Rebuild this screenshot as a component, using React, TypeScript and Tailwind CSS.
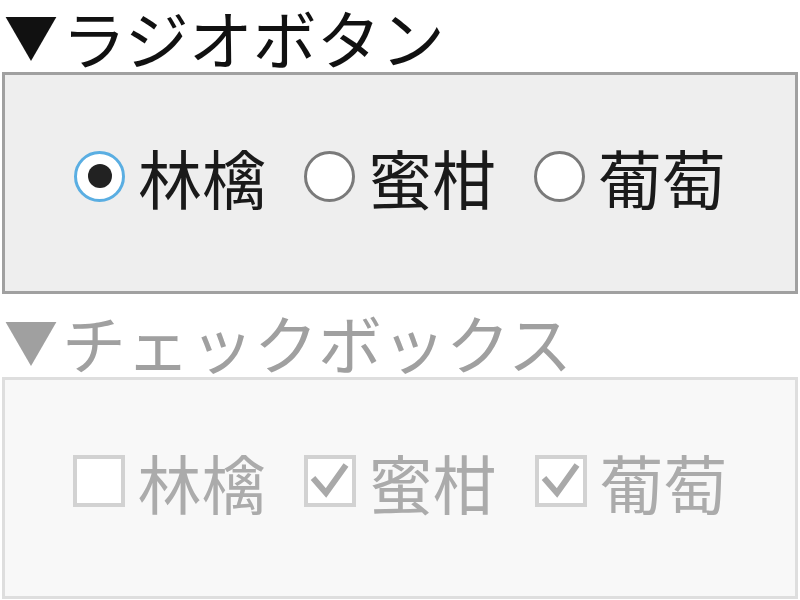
import React from 'react';

const items = ['林檎', '蜜柑', '葡萄'];

function Radio({ checked }: { checked: boolean }) {
  return (
    <span
      className={
        checked
          ? 'w-[51px] h-[51px] rounded-full border-[3px] border-[#5aaee2] bg-white flex items-center justify-center shrink-0'
          : 'w-[51px] h-[51px] rounded-full border-[3px] border-[#7a7a7a] bg-white flex items-center justify-center shrink-0'
      }
    >
      {checked && <span className="w-[24px] h-[24px] rounded-full bg-[#222]" />}
    </span>
  );
}

function Checkbox({ checked }: { checked: boolean }) {
  return (
    <span className="w-[52px] h-[52px] border-[4px] border-[#d2d2d2] bg-white flex items-center justify-center shrink-0">
      {checked && (
        <svg width="44" height="44" viewBox="0 0 44 44">
          <polyline points="5,19 18,34 38,6" fill="none" stroke="#a9a9a9" strokeWidth="6" />
        </svg>
      )}
    </span>
  );
}

function Heading({ text, dim }: { text: string; dim?: boolean }) {
  return (
    <h2
      className={
        dim
          ? 'flex items-center h-[72px] text-[#a0a0a0] font-normal whitespace-nowrap'
          : 'flex items-center h-[72px] text-[#111] font-normal whitespace-nowrap'
      }
    >
      <span className="w-[62px] text-center text-[54px] leading-[64px] -mt-[2px]">▼</span>
      <span className="text-[64px] leading-[64px]">{text}</span>
    </h2>
  );
}

export default function App() {
  return (
    <div className="w-[800px] h-[600px] bg-white overflow-hidden font-['Noto_Sans_CJK_JP',sans-serif]">
      <Heading text="ラジオボタン" />
      <div className="mx-[2px] h-[222px] border-[3px] border-[#a0a0a0] bg-[#eeeeee] flex items-center justify-center gap-[38px] pb-[14px]">
        {items.map((t, i) => (
          <label key={t} className="flex items-center gap-[13px]">
            <Radio checked={i === 0} />
            <span className="text-[64px] leading-none text-[#1a1a1a]">{t}</span>
          </label>
        ))}
      </div>
      <div className="mt-[11px]">
        <Heading text="チェックボックス" dim />
      </div>
      <div className="mx-[2px] h-[222px] border-[3px] border-[#dedede] bg-[#f8f8f8] flex items-center justify-center gap-[38px] pb-[14px]">
        {items.map((t, i) => (
          <label key={t} className="flex items-center gap-[13px]">
            <Checkbox checked={i !== 0} />
            <span className="text-[64px] leading-none text-[#ababab]">{t}</span>
          </label>
        ))}
      </div>
    </div>
  );
}
